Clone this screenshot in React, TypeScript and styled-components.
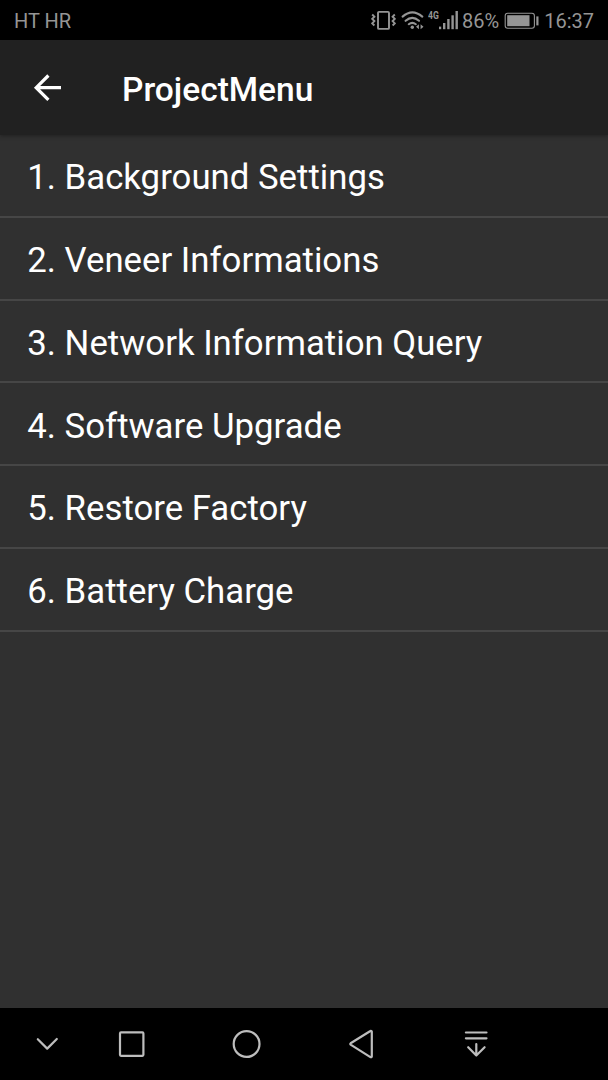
import React from "react";
import styled, { createGlobalStyle } from "styled-components";

const GlobalStyle = createGlobalStyle`
  * { box-sizing: border-box; }
  body { margin: 0; background: #000; font-family: Roboto, sans-serif; }
`;

const Screen = styled.div`
  display: flex;
  flex-direction: column;
  width: 608px;
  height: 1080px;
  background: #303030;
  overflow: hidden;
`;

const StatusBar = styled.header`
  display: flex;
  justify-content: space-between;
  align-items: center;
  flex: none;
  height: 40px;
  padding: 2px 14px 0 14px;
  background: #000;
  color: #959595;
  font-size: 20px;
  line-height: 24px;
  white-space: nowrap;
`;

const StatusGroup = styled.div`
  display: flex;
  align-items: center;
`;

const StatusIcon = styled.svg<{ $gap?: number }>`
  display: block;
  flex: none;
  margin-right: ${({ $gap = 0 }) => $gap}px;
`;

const StatusText = styled.span<{ $gap?: number }>`
  margin-right: ${({ $gap = 0 }) => $gap}px;
`;

const AppBar = styled.div`
  display: flex;
  align-items: center;
  flex: none;
  height: 95px;
  padding: 1px 0 0 32px;
  background: #212121;
  box-shadow: 0 1px 4px rgba(0, 0, 0, 0.35);
  z-index: 1;
`;

const BackButton = styled.button`
  display: block;
  width: 90px;
  padding: 0;
  border: 0;
  background: none;
  color: #fff;
`;

const BackArrow = styled.svg`
  display: block;
`;

const Title = styled.h1`
  margin: 0;
  padding-top: 3px;
  color: #fff;
  font-size: 33.5px;
  font-weight: 500;
  line-height: 40px;
`;

const Menu = styled.ul`
  flex: 1;
  margin: 0;
  padding: 0;
  list-style: none;
`;

const MenuItem = styled.li`
  display: flex;
  align-items: center;
  height: 82.75px;
  padding: 4px 0 0 27.3px;
  border-bottom: 2px solid #464646;
  color: #fff;
  font-size: 34.75px;
  white-space: nowrap;
`;

const NavBar = styled.nav`
  display: flex;
  align-items: center;
  flex: none;
  height: 72px;
  padding-left: 27px;
  background: #000;
`;

const NavButton = styled.button<{ $width: number }>`
  display: flex;
  justify-content: center;
  width: ${({ $width }) => $width}px;
  padding: 0;
  border: 0;
  background: none;
  color: #bdbdbd;
`;

const NavSvg = ({ children }: { children: React.ReactNode }) => (
  <svg width="40" height="40" viewBox="0 0 40 40" fill="none" stroke="currentColor" strokeWidth="2.2" strokeLinecap="round" strokeLinejoin="round">
    {children}
  </svg>
);

const VibrateIcon = () => (
  <StatusIcon $gap={4.5} width="25" height="22" viewBox="0 0 25 22" fill="none" stroke="currentColor">
    <rect x="7" y="1.9" width="11" height="17" rx="1" strokeWidth="1.9" />
    <path d="M1.2 4.5l2.2 2.2-2.2 2.2 2.2 2.2-2.2 2.2 2.2 2.2M23.8 4.5l-2.2 2.2 2.2 2.2-2.2 2.2 2.2 2.2-2.2 2.2" strokeWidth="1.9" />
  </StatusIcon>
);

const WifiIcon = () => (
  <StatusIcon $gap={4.7} width="23" height="22" viewBox="0 0 23 22" fill="none" stroke="currentColor" strokeWidth="2.1" strokeLinecap="round">
    <path d="M1.6 6.6Q11.3-1.9 21.3 6.6M4.6 10.8Q11.3 5 18 10.8M7.8 14.2Q11.3 11.4 14.8 14.2" />
    <circle cx="11.3" cy="17.2" r="1.7" fill="currentColor" stroke="none" />
    <path d="M17.9 14.3v5L15 16.8zM19.6 14.3v5l2.9-2.5z" fill="currentColor" stroke="none" />
  </StatusIcon>
);

const NetworkLabel = styled.span`
  align-self: flex-start;
  width: 12px;
  margin: 1px -1px 0 0;
  font: 700 10.5px/12px Roboto, sans-serif;
  transform: scaleX(0.82);
  transform-origin: left;
`;

const SignalIcon = () => (
  <StatusIcon $gap={3.8} width="19" height="20" viewBox="0 0 19 20" fill="currentColor">
    <rect x="0" y="15.6" width="2.2" height="2.6" />
    <rect x="4" y="12" width="2.4" height="6.2" />
    <rect x="8.2" y="8" width="2.4" height="10.2" />
    <rect x="12.4" y="4.3" width="2.4" height="13.9" />
    <rect x="16.5" y="0" width="2.4" height="18.2" />
  </StatusIcon>
);

const BatteryIcon = () => (
  <StatusIcon $gap={5.5} width="35" height="18" viewBox="0 0 35 18" fill="currentColor">
    <rect x="1.2" y="1.2" width="29.2" height="15" rx="2.5" fill="none" stroke="currentColor" strokeWidth="1.1" />
    <rect x="3.2" y="3.2" width="22.3" height="11" />
    <rect x="32.3" y="4.4" width="2.2" height="9" />
  </StatusIcon>
);

const items = [
  "Background Settings",
  "Veneer Informations",
  "Network Information Query",
  "Software Upgrade",
  "Restore Factory",
  "Battery Charge",
];

export default function App() {
  return (
    <Screen>
      <GlobalStyle />
      <StatusBar>
        <StatusText>HT HR</StatusText>
        <StatusGroup>
          <VibrateIcon />
          <WifiIcon />
          <NetworkLabel>4G</NetworkLabel>
          <SignalIcon />
          <StatusText $gap={4.5}>86%</StatusText>
          <BatteryIcon />
          <StatusText>16:37</StatusText>
        </StatusGroup>
      </StatusBar>
      <AppBar>
        <BackButton aria-label="Back">
          <BackArrow width="32" height="32" viewBox="0 0 32 32" fill="none" stroke="currentColor" strokeWidth="3.2">
            <path d="M29 15.7H4M16.4 3.5L4.2 15.7l12.2 12.2" />
          </BackArrow>
        </BackButton>
        <Title>ProjectMenu</Title>
      </AppBar>
      <Menu>
        {items.map((label, i) => (
          <MenuItem key={label}>{`${i + 1}. ${label}`}</MenuItem>
        ))}
      </Menu>
      <NavBar>
        <NavButton $width={40} aria-label="Hide">
          <NavSvg><path d="M10.8 15.2L20.2 24.6l9.6-9.6" /></NavSvg>
        </NavButton>
        <NavButton $width={130} aria-label="Recent">
          <NavSvg><rect x="8" y="8.4" width="23.4" height="23.4" rx="1" /></NavSvg>
        </NavButton>
        <NavButton $width={100} aria-label="Home">
          <NavSvg><circle cx="19.6" cy="20" r="12.9" /></NavSvg>
        </NavButton>
        <NavButton $width={130} aria-label="Back">
          <NavSvg><path d="M29.8 7.6v24.8a.9.9 0 0 1-1.4.7L8.6 20.6a.8.8 0 0 1 0-1.3L28.4 7a.9.9 0 0 1 1.4.6z" /></NavSvg>
        </NavButton>
        <NavButton $width={100} aria-label="Notifications">
          <NavSvg><path d="M8.9 8.5h20.6M8.9 14.3h20.6M19.3 20v11.4M11.2 23.2l8.1 8.3 8.3-8.3" /></NavSvg>
        </NavButton>
      </NavBar>
    </Screen>
  );
}
